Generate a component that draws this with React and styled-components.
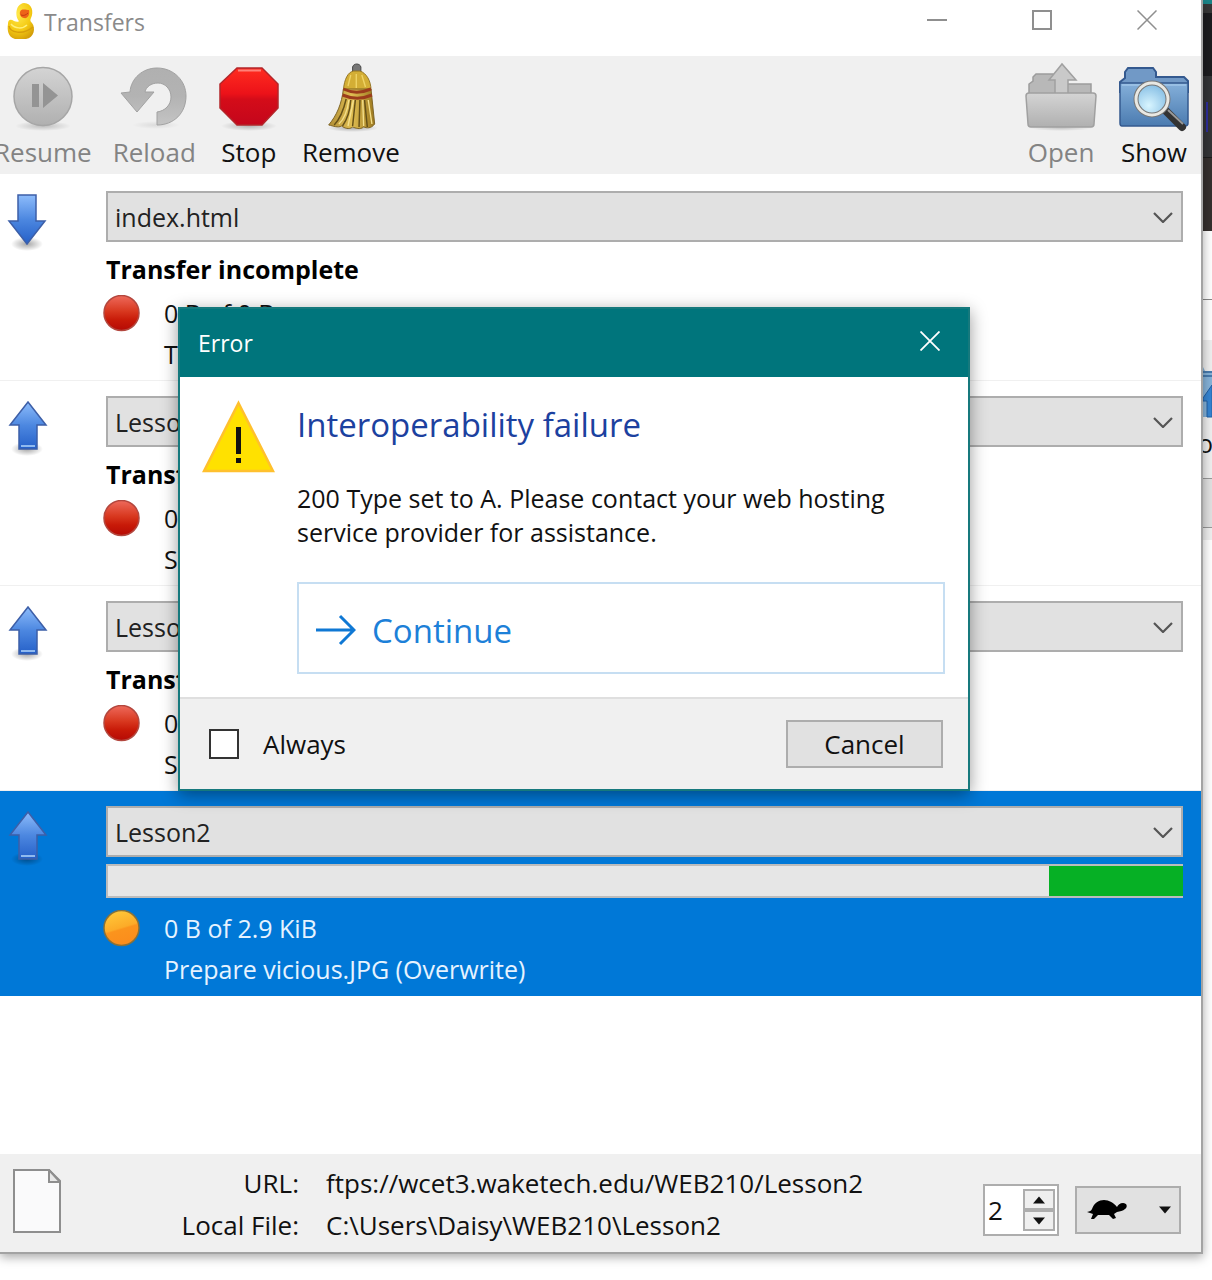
import React, { useState } from "react";
import styled, { createGlobalStyle } from "styled-components";

const GlobalStyle = createGlobalStyle`
  *, *::before, *::after { box-sizing: border-box; }
  html, body { margin: 0; padding: 0; }
  body {
    background: #fff;
    color: #111;
    font-family: "Open Sans", "Noto Sans", sans-serif;
    font-size: 26px;
    overflow-x: hidden;
  }
  button, input, select { font: inherit; color: inherit; margin: 0; border-radius: 0; }
  svg { display: block; flex: none; }
`;

/* ---------- desktop ---------- */

const Desktop = styled.div`
  display: grid;
  grid-template-columns: minmax(0, 1fr) 9px;
  min-height: 100vh;
  align-items: start;
  overflow: hidden;
`;

const Window = styled.main`
  position: relative;
  z-index: 1;
  display: flex;
  flex-direction: column;
  background: #fff;
  border-right: 2px solid #a3a3a3;
  border-bottom: 2px solid #a3a3a3;
  box-shadow: 0 3px 10px rgba(0, 0, 0, 0.35);
`;

const Backdrop = styled.div`
  display: flex;
  flex-direction: column;
  overflow: hidden;
`;

const Slab = styled.div`
  height: ${(p) => p.$h}px;
  background: ${(p) => p.$bg || "#fff"};
  border-top: ${(p) => (p.$line ? `1px solid ${p.$line}` : "0")};
  border-bottom: ${(p) => (p.$under ? `1px solid ${p.$under}` : "0")};
  display: flex;
  align-items: center;
  overflow: hidden;
`;

/* ---------- title bar ---------- */

const TitleBar = styled.header`
  display: flex;
  justify-content: space-between;
  height: 56px;
  padding-right: 2px;
`;

const TitleText = styled.h1`
  display: flex;
  align-items: center;
  gap: 8px;
  margin: 0;
  height: 44px;
  padding-left: 6px;
  font-size: 23px;
  font-weight: 400;
  color: #8a8a8a;
`;

const WindowButtons = styled.div`
  display: flex;
`;

const WindowButton = styled.button`
  display: grid;
  place-items: center;
  width: 105px;
  height: 40px;
  padding: 0;
  border: 0;
  background: none;
  color: #8f8f8f;
`;

/* ---------- toolbar ---------- */

const Toolbar = styled.nav`
  display: flex;
  justify-content: space-between;
  padding: 6px 11px 4px 0;
  background: #f0f0f0;
  overflow: hidden;
`;

const ToolGroup = styled.div`
  display: flex;
  gap: 21px;
  margin-left: ${(p) => p.$shift || 0}px;
`;

const Tool = styled.button`
  display: flex;
  flex-direction: column;
  align-items: center;
  padding: 0;
  border: 0;
  background: none;
  line-height: 36px;
  color: ${(p) => (p.disabled ? "#838383" : "#111")};
`;

/* ---------- transfer list ---------- */

const List = styled.ul`
  list-style: none;
  margin: 0;
  padding: 2px 0 158px;
`;

const Row = styled.li`
  display: grid;
  grid-template-columns: 103px minmax(0, 1fr);
  padding: 15px 18px 5px 0;
  border-bottom: 1px solid ${(p) => (p.$active ? "#0078d7" : "#f0f0f0")};
  background: ${(p) => (p.$active ? "#0078d7" : "#fff")};
  color: ${(p) => (p.$active ? "#e6f3ff" : "#111")};
  font-size: 25px;
`;

const Direction = styled.div`
  padding: 2px 0 0 6px;
`;

const Indented = styled.div`
  padding-left: 3px;
`;

const SelectFrame = styled.div`
  display: grid;
  grid-template-columns: minmax(0, 1fr) 36px;
  align-items: center;
  height: 51px;
  border: 2px solid #adadad;
  background: #e1e1e1;

  select {
    grid-area: 1 / 1 / 2 / 3;
    width: 100%;
    height: 47px;
    padding: 0 40px 0 7px;
    border: 0;
    background: none;
    appearance: none;
    color: #222;
    outline: none;
  }
  svg {
    grid-area: 1 / 2 / 2 / 3;
    justify-self: center;
    pointer-events: none;
  }
`;

const StatusSlot = styled.div`
  height: 51px;
  padding-top: 7px;
`;

const StatusText = styled.strong`
  display: block;
  line-height: 40px;
  font-weight: 700;
  color: #000;
`;

const Track = styled.div`
  display: flex;
  justify-content: flex-end;
  height: 34px;
  border: 2px solid #bcbcbc;
  border-right: 0;
  background: #e6e6e6;

  &::after {
    content: "";
    width: 12.5%;
    background: #06b025;
  }
`;

const Detail = styled.div`
  display: grid;
  grid-template-columns: 37px minmax(0, 1fr);
  column-gap: 24px;
  align-items: center;
  line-height: 41px;

  span { grid-column: 2; }
  svg { grid-row: 1; }
`;

/* ---------- footer ---------- */

const Footer = styled.footer`
  display: flex;
  align-items: center;
  padding: 8px 20px 6px 13px;
  background: #f0f0f0;
`;

const FileIcon = styled.div`
  padding-bottom: 6px;
`;

const Info = styled.dl`
  flex: 1;
  display: grid;
  grid-template-columns: 238px minmax(0, 1fr);
  column-gap: 27px;
  margin: 0;
  line-height: 42px;

  dt { text-align: right; }
  dd { margin: 0; }
`;

const Controls = styled.div`
  display: flex;
  align-items: center;
  gap: 16px;
  padding-top: 12px;
`;

const Spinner = styled.div`
  display: flex;
  align-items: center;
  justify-content: space-between;
  width: 76px;
  height: 52px;
  padding: 2px;
  border: 2px solid #adadad;
  background: #fff;

  input {
    width: 30px;
    height: 40px;
    padding: 0 1px;
    border: 0;
    background: none;
    appearance: textfield;
    outline: none;
  }
  input::-webkit-inner-spin-button { appearance: none; margin: 0; }
`;

const Steps = styled.div`
  display: flex;
  flex-direction: column;
`;

const Step = styled.button`
  display: grid;
  place-items: center;
  width: 32px;
  height: 21px;
  padding: 0;
  border: 2px solid #adadad;
  background: #efefef;
`;

const SpeedButton = styled.button`
  display: flex;
  align-items: center;
  justify-content: space-between;
  width: 106px;
  height: 48px;
  padding: 0 8px 0 9px;
  border: 2px solid #adadad;
  background: #e1e1e1;
`;

/* ---------- dialog ---------- */

const Dialog = styled.section`
  position: absolute;
  top: 307px;
  left: 178px;
  width: 792px;
  border: 2px solid #16797d;
  background: #fff;
  box-shadow: 0 4px 16px rgba(0, 0, 0, 0.4);
`;

const DialogBar = styled.header`
  display: flex;
  align-items: center;
  justify-content: space-between;
  height: 68px;
  padding-left: 18px;
  background: #00757c;
  color: #fff;
  font-size: 23px;
`;

const DialogClose = styled.button`
  display: grid;
  place-items: center;
  width: 76px;
  height: 64px;
  align-self: flex-start;
  padding: 0;
  border: 0;
  background: none;
  color: #fff;
`;

const DialogBody = styled.div`
  display: grid;
  grid-template-columns: 73px minmax(0, 1fr);
  column-gap: 22px;
  padding: 23px 23px 23px 22px;
`;

const Heading = styled.h2`
  margin: 0;
  font-size: 33px;
  line-height: 50px;
  font-weight: 400;
  color: #1c419f;
`;

const Message = styled.p`
  margin: 31px 0 33px;
  font-size: 25px;
  line-height: 34px;
`;

const CommandLink = styled.button`
  display: flex;
  align-items: center;
  gap: 16px;
  width: 100%;
  height: 92px;
  padding: 4px 16px 0;
  border: 2px solid #c6def2;
  background: #fff;
  font-size: 33px;
  color: #1c80d8;
`;

const DialogFooter = styled.footer`
  display: flex;
  align-items: center;
  justify-content: space-between;
  height: 92px;
  padding: 0 25px 0 29px;
  border-top: 2px solid #dfdfdf;
  background: #f0f0f0;
`;

const Always = styled.label`
  display: flex;
  align-items: center;
  gap: 24px;

  input {
    width: 30px;
    height: 30px;
    border: 2px solid #333;
    background: #fff;
    appearance: none;
  }
  input:checked { box-shadow: inset 0 0 0 5px #fff; background: #333; }
`;

const PushButton = styled.button`
  width: 157px;
  height: 48px;
  padding: 0;
  border: 2px solid #adadad;
  background: #e1e1e1;
`;

/* ---------- drawings ---------- */

const DefsSvg = styled.svg`
  position: absolute;
`;

const Defs = () => (
  <DefsSvg width="0" height="0" aria-hidden="true">
    <defs>
      <linearGradient id="grey" x1="0" y1="0" x2="0" y2="1">
        <stop offset="0" stopColor="#d4d4d4" /><stop offset="1" stopColor="#b0b0b0" />
      </linearGradient>
      <linearGradient id="reload" x1="0" y1="0" x2="0" y2="1">
        <stop offset="0" stopColor="#b0b0b0" /><stop offset="0.5" stopColor="#b3b3b3" /><stop offset="1" stopColor="#c4c4c4" />
      </linearGradient>
      <linearGradient id="red" x1="0" y1="0" x2="0" y2="1">
        <stop offset="0" stopColor="#ff2c20" /><stop offset="0.45" stopColor="#ec1219" /><stop offset="0.55" stopColor="#d40c19" /><stop offset="1" stopColor="#c4061c" />
      </linearGradient>
      <linearGradient id="straw" x1="0" y1="0" x2="1" y2="0">
        <stop offset="0" stopColor="#b08d35" /><stop offset="0.5" stopColor="#dfbd52" /><stop offset="1" stopColor="#9c781f" />
      </linearGradient>
      <linearGradient id="folder" x1="0" y1="0" x2="0" y2="1">
        <stop offset="0" stopColor="#85b0da" /><stop offset="1" stopColor="#4b7bb0" />
      </linearGradient>
      <radialGradient id="lens" cx="0.4" cy="0.7" r="0.7">
        <stop offset="0" stopColor="#d8f5ff" /><stop offset="1" stopColor="#83bce3" />
      </radialGradient>
      <linearGradient id="arrow" x1="0" y1="0" x2="0" y2="1">
        <stop offset="0" stopColor="#8dbcfb" /><stop offset="0.5" stopColor="#4c87e0" /><stop offset="1" stopColor="#2560c8" />
      </linearGradient>
      <linearGradient id="redDot" x1="0" y1="0" x2="0" y2="1">
        <stop offset="0" stopColor="#ee6a5c" /><stop offset="0.45" stopColor="#d8381f" /><stop offset="0.7" stopColor="#c81a08" /><stop offset="1" stopColor="#b50a05" />
      </linearGradient>
      <linearGradient id="orangeDot" x1="0.3" y1="0" x2="0.6" y2="1">
        <stop offset="0" stopColor="#ffc93a" /><stop offset="0.5" stopColor="#fcab28" /><stop offset="0.55" stopColor="#fb941d" /><stop offset="1" stopColor="#fb8c1c" />
      </linearGradient>
      <radialGradient id="duck" cx="0.4" cy="0.3" r="0.8">
        <stop offset="0" stopColor="#ffe94a" /><stop offset="0.6" stopColor="#f4c912" /><stop offset="1" stopColor="#cf9808" />
      </radialGradient>
      <radialGradient id="shade">
        <stop offset="0" stopColor="#000" stopOpacity="0.35" /><stop offset="1" stopColor="#000" stopOpacity="0" />
      </radialGradient>
    </defs>
  </DefsSvg>
);

const Duck = () => (
  <svg width="30" height="40" viewBox="0 0 30 40">
    <path d="M2 22C2 17 5 17 8 19C10 20 13 20 13 19C9 15 9 2 18 1C26 1 28 10 25 16C24 18 24 19 26 21C30 26 28 36 20 37H9C2 35 1 28 2 22Z" fill="url(#duck)" />
    <path d="M3 24C4 30 16 34 27 25" stroke="#d79f0a" strokeWidth="1.5" fill="none" />
    <path d="M5 22C9 27 17 27 21 23" stroke="#fff07a" strokeWidth="1.5" fill="none" />
    <path d="M14 10C15 6 20 8 23 8C24 12 22 17 18 16C16 16 13 13 14 10Z" fill="#ee6418" />
    <path d="M15 13C18 14 20 13 22 11" stroke="#c53c10" fill="none" />
  </svg>
);

const ResumeIcon = () => (
  <svg width="64" height="72" viewBox="0 0 64 72">
    <ellipse cx="32" cy="64" rx="28" ry="5" fill="url(#shade)" opacity="0.6" />
    <circle cx="32" cy="34.500" r="29" fill="url(#grey)" stroke="#a6a6a6" strokeWidth="1.500" />
    <path d="M21 22H28V45H21ZM32 21L47 33.500L32 46Z" fill="#949494" />
  </svg>
);

const ReloadIcon = () => (
  <svg width="68" height="72" viewBox="0 0 68 72">
    <ellipse cx="36" cy="63" rx="24" ry="4" fill="url(#shade)" opacity="0.25" />
    <path d="M37 63V50C45 49 51 43 51 35C51 27 45 21 38 21C31 21 26 25 25 30H34L17 50L1 31L10 30C11 16 23 6 37 6C54 6 66 19 66 34C66 51 54 63 37 63Z" fill="url(#reload)" stroke="#a2a2a2" />
  </svg>
);

const StopIcon = () => (
  <svg width="64" height="72" viewBox="0 0 64 72">
    <ellipse cx="32" cy="64" rx="28" ry="5" fill="url(#shade)" opacity="0.7" />
    <path d="M20 6H45L61 22V46L45 63H20L3 46V22Z" fill="url(#red)" stroke="#b3262a" strokeWidth="1.500" />
    <path d="M21 8.500H44" stroke="#ff8078" strokeWidth="2" />
  </svg>
);

const BroomIcon = () => (
  <svg width="52" height="72" viewBox="0 0 52 72">
    <g transform="translate(0 1) scale(0.92 1)">
      <ellipse cx="30" cy="65" rx="28" ry="4" fill="url(#shade)" opacity="0.8" />
      <path d="M30 10V4C31 0 38 0 39 4V10Z" fill="#777" stroke="#444" />
      <path d="M20 27C21 16 25 9 31 8H38C45 10 50 18 50 27Z" fill="#d3ae35" stroke="#927323" />
      <path d="M20 26H50L54 61C50 66 45 65 42 64C38 67 33 65 30 64C26 67 21 65 18 63C14 65 9 63 4 62C13 52 18 41 20 26Z" fill="url(#straw)" stroke="#7b6122" />
      <path d="M23 36C20 48 16 56 10 62M28 37C27 50 23 58 19 63M33 37L30 63M38 37L37 64M43 37L46 64" stroke="#655018" strokeWidth="1.600" fill="none" />
      <path d="M26 37C24 50 20 57 15 61M31 37L25 63M41 37L42 63M47 37L51 61" stroke="#f4df8b" strokeWidth="1.500" fill="none" />
      <path d="M20 26C29 30 40 30 50 26M19 32C29 36 41 36 51 32" stroke="#9c3d1c" strokeWidth="3" fill="none" />
      <path d="M28 12L25 23M34 11V25M40 12L44 24" stroke="#efd365" strokeWidth="1.500" />
    </g>
  </svg>
);

const OpenIcon = () => (
  <svg width="72" height="72" viewBox="0 0 72 72">
    <ellipse cx="36" cy="66" rx="32" ry="3" fill="url(#shade)" opacity="0.5" />
    <path d="M4 32V22L8 19V15L11 12H28L31 17H38V22H66V32Z" fill="#b8b8b8" stroke="#9c9c9c" strokeWidth="1.500" />
    <path d="M30 34V18H24L37 2L51 18H43V34Z" fill="#c9c9c9" stroke="#a0a0a0" strokeWidth="1.500" />
    <path d="M1 34C1 32 2 31 4 31H68C70 31 71 32 71 34L69 62C69 64 68 65 66 65H6C4 65 3 64 3 62Z" fill="url(#grey)" stroke="#a0a0a0" strokeWidth="1.500" />
  </svg>
);

const ShowIcon = () => (
  <svg width="72" height="72" viewBox="0 0 72 72">
    <path d="M2 30V20L7 16V10L10 6H35L38 10V15H66L70 19V30Z" fill="#7199c6" stroke="#34598f" strokeWidth="2" />
    <path d="M2 21H70V61C70 63 69 64 67 64H4C3 64 2 63 2 61Z" fill="url(#folder)" stroke="#34598f" strokeWidth="1.500" />
    <path d="M4 23H68" stroke="#add0ef" />
    <path d="M48 49L64 65" stroke="#333" strokeWidth="8" strokeLinecap="round" />
    <path d="M50 48L65 62" stroke="#999" strokeWidth="2" />
    <circle cx="34" cy="37" r="16" fill="url(#lens)" stroke="#777" strokeWidth="5" />
    <circle cx="34" cy="37" r="16" fill="none" stroke="#e8e8e3" strokeWidth="3" />
  </svg>
);

const TransferArrow = ({ down }) => (
  <svg width="42" height="60" viewBox="0 0 42 60">
    <ellipse cx="21" cy="51" rx="16" ry="7" fill="url(#shade)" />
    {down ? (
      <path d="M12 2H30V28H39L21 51L3 28H12Z" fill="url(#arrow)" stroke="#3d5fa8" strokeWidth="1.500" />
    ) : (
      <>
        <path d="M13 51V27H4L22 4L40 27H31V51Z" fill="url(#arrow)" stroke="#3d5fa8" strokeWidth="1.500" />
        <path d="M15 48H29" stroke="#8fb9ef" strokeWidth="2" />
      </>
    )}
  </svg>
);

const Dot = ({ active }) => (
  <svg width="37" height="38" viewBox="0 0 37 38">
    <circle cx="18.500" cy="18" r="17.500" fill={active ? "url(#orangeDot)" : "url(#redDot)"} stroke={active ? "#87713a" : "#b3473e"} strokeWidth="1.500" />
  </svg>
);

const Chevron = () => (
  <svg width="20" height="12" viewBox="0 0 20 12">
    <path d="M1 2L10 11L19 2" fill="none" stroke="#555" strokeWidth="2.200" />
  </svg>
);

const Cross = ({ size, width }) => (
  <svg width={size} height={size} viewBox="0 0 20 20">
    <path d="M0.500 0.500L19.500 19.500M19.500 0.500L0.500 19.500" stroke="currentColor" strokeWidth={width} />
  </svg>
);

const Caret = ({ up }) => (
  <svg width="12" height="8" viewBox="0 0 12 8">
    <path d={up ? "M0 7.500L6 0.500L12 7.500Z" : "M0 0.500H12L6 7.500Z"} fill="#111" />
  </svg>
);

const Turtle = () => (
  <svg width="42" height="24" viewBox="0 0 42 24">
    <path d="M1 14C4 13 5 13 6 11C8 5 13 2 18 2C23 2 28 5 31 9C32 7 34 5 37 5C41 5 42 9 39 11C37 13 34 13 31 14L28 16L30 20L27 21L23 17H12L8 21H5L7 16Z" fill="#000" />
  </svg>
);

const Document = () => (
  <svg width="48" height="64" viewBox="0 0 48 64">
    <path d="M1 1H36L47 12V63H1Z" fill="#fafafb" stroke="#8e8e8e" strokeWidth="2" />
    <path d="M36 1V13H47Z" fill="#e8e8e8" stroke="#8e8e8e" strokeWidth="2" />
  </svg>
);

const Warning = () => (
  <svg width="73" height="73" viewBox="0 0 73 73">
    <path d="M36.500 3L71 71H2Z" fill="#ffe100" stroke="#ffc02e" strokeWidth="2.500" />
    <path d="M34 27H39V54H34ZM34 58H39V63H34Z" fill="#111" />
  </svg>
);

const LongArrow = () => (
  <svg width="41" height="32" viewBox="0 0 41 32">
    <path d="M1 16H39M25 2L39 16L25 30" fill="none" stroke="#0f78d4" strokeWidth="3" />
  </svg>
);

const HiddenFolder = () => (
  <svg width="9" height="62" viewBox="0 0 9 62">
    <path d="M0 4L2 8H9V54H0Z" fill="#86b3d9" />
    <path d="M0 9H9M0 13H9" stroke="#34699f" strokeWidth="1.500" />
    <path d="M9 22L0 35V38H4V54H9Z" fill="#3585d3" stroke="#2360a5" />
  </svg>
);

const HiddenLabel = styled.span`
  margin-left: -5px;
  line-height: 30px;
  font-size: 25px;
`;

/* ---------- data ---------- */

const transfers = [
  { name: "index.html", down: true, status: "Transfer incomplete", size: "0 B of 0 B", note: "T" },
  { name: "Lesson2", status: "Transfer incomplete", size: "0 B", note: "S" },
  { name: "Lesson2", status: "Transfer incomplete", size: "0 B", note: "S" },
  { name: "Lesson2", active: true, size: "0 B of 2.9 KiB", note: "Prepare vicious.JPG (Overwrite)" },
];

const Transfer = ({ name, down, status, size, note, active }) => (
  <Row $active={active}>
    <Direction><TransferArrow down={down} /></Direction>
    <div>
      <Indented>
        <SelectFrame>
          <select aria-label="Transfer item" defaultValue={name}>
            <option>{name}</option>
          </select>
          <Chevron />
        </SelectFrame>
        <StatusSlot>
          {active ? <Track role="progressbar" aria-label="Progress" /> : <StatusText>{status}</StatusText>}
        </StatusSlot>
      </Indented>
      <Detail>
        <Dot active={active} />
        <span>{size}</span>
        <span>{note}</span>
      </Detail>
    </div>
  </Row>
);

export default function App() {
  const [count, setCount] = useState(2);
  return (
    <>
      <GlobalStyle />
      <Defs />
      <Desktop>
        <Window>
          <TitleBar>
            <TitleText><Duck />Transfers</TitleText>
            <WindowButtons>
              <WindowButton aria-label="Minimize">
                <svg width="20" height="20"><path d="M0 10H20" stroke="currentColor" strokeWidth="2" /></svg>
              </WindowButton>
              <WindowButton aria-label="Maximize">
                <svg width="20" height="20"><rect x="1" y="1" width="18" height="18" fill="none" stroke="currentColor" strokeWidth="2" /></svg>
              </WindowButton>
              <WindowButton aria-label="Close"><Cross size={20} width={1.5} /></WindowButton>
            </WindowButtons>
          </TitleBar>

          <Toolbar>
            <ToolGroup $shift={-6}>
              <Tool disabled><ResumeIcon />Resume</Tool>
              <Tool disabled><ReloadIcon />Reload</Tool>
              <Tool><StopIcon />Stop</Tool>
              <Tool><BroomIcon />Remove</Tool>
            </ToolGroup>
            <ToolGroup>
              <Tool disabled><OpenIcon />Open</Tool>
              <Tool><ShowIcon />Show</Tool>
            </ToolGroup>
          </Toolbar>

          <List>
            {transfers.map((t, i) => <Transfer key={i} {...t} />)}
          </List>

          <Footer>
            <FileIcon><Document /></FileIcon>
            <Info>
              <dt>URL:</dt>
              <dd>ftps://wcet3.waketech.edu/WEB210/Lesson2</dd>
              <dt>Local File:</dt>
              <dd>C:\Users\Daisy\WEB210\Lesson2</dd>
            </Info>
            <Controls>
              <Spinner>
                <input type="number" aria-label="Connections" value={count} onChange={(e) => setCount(Number(e.target.value))} />
                <Steps>
                  <Step aria-label="Increase" onClick={() => setCount(count + 1)}><Caret up /></Step>
                  <Step aria-label="Decrease" onClick={() => setCount(Math.max(1, count - 1))}><Caret /></Step>
                </Steps>
              </Spinner>
              <SpeedButton aria-label="Bandwidth" aria-haspopup="menu"><Turtle /><Caret /></SpeedButton>
            </Controls>
          </Footer>

          <Dialog role="dialog" aria-label="Error">
            <DialogBar>
              Error
              <DialogClose aria-label="Close dialog"><Cross size={20} width={1.8} /></DialogClose>
            </DialogBar>
            <DialogBody>
              <Warning />
              <div>
                <Heading>Interoperability failure</Heading>
                <Message>200 Type set to A. Please contact your web hosting service provider for assistance.</Message>
                <CommandLink><LongArrow />Continue</CommandLink>
              </div>
            </DialogBody>
            <DialogFooter>
              <Always><input type="checkbox" />Always</Always>
              <PushButton>Cancel</PushButton>
            </DialogFooter>
          </Dialog>
        </Window>

        <Backdrop aria-hidden="true">
          <Slab $h={4} $bg="#1b8588" />
          <Slab $h={9} $bg="#383838" />
          <Slab $h={63} $bg="#1c1c1f" />
          <Slab $h={81} $bg="#333436">
            <svg width="9" height="30"><path d="M4 0V30" stroke="#2e2e9c" strokeWidth="2" /></svg>
          </Slab>
          <Slab $h={74} $bg="#35302e" $line="#1d1d1d" />
          <Slab $h={68} />
          <Slab $h={41} $line="#888" />
          <Slab $h={20} $bg="#efefef" />
          <Slab $h={68} $bg="#efefef"><HiddenFolder /></Slab>
          <Slab $h={30} $bg="#efefef"><HiddenLabel>o</HiddenLabel></Slab>
          <Slab $h={20} $bg="#efefef" />
          <Slab $h={50} $bg="#e1e1e1" $line="#999" $under="#999" />
          <Slab $h={12} $bg="#efefef" />
        </Backdrop>
      </Desktop>
    </>
  );
}
